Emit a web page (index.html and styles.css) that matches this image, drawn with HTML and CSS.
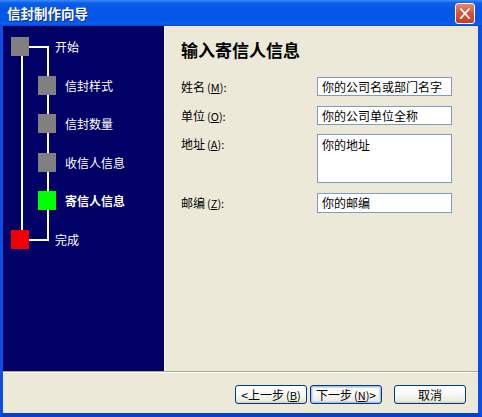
FILE: index.html
```html
<!DOCTYPE html>
<html lang="zh">
<head>
<meta charset="utf-8">
<title>信封制作向导</title>
<link rel="stylesheet" href="styles.css">
</head>
<body>
<div class="window">
  <div class="titlebar">
    <span class="title">信封制作向导</span>
    <span class="close">
      <svg width="20" height="21" viewBox="0 0 20 21"><path d="M5.5 5.5 L14.5 15.5 M14.5 5.5 L5.5 15.5" stroke="#fff" stroke-width="2" stroke-linecap="square"/></svg>
    </span>
  </div>
  <div class="frame">
    <div class="main">
      <div class="steps">
        <span class="line h-top"></span>
        <span class="line v-right"></span>
        <span class="line h-bottom"></span>
        <span class="line v-left"></span>
        <div class="step lvl0"><span class="box gray"></span><span class="label">开始</span></div>
        <div class="step lvl1"><span class="box gray"></span><span class="label">信封样式</span></div>
        <div class="step lvl1"><span class="box gray"></span><span class="label">信封数量</span></div>
        <div class="step lvl1"><span class="box gray"></span><span class="label">收信人信息</span></div>
        <div class="step lvl1"><span class="box green"></span><span class="label current">寄信人信息</span></div>
        <div class="step lvl0"><span class="box red"></span><span class="label">完成</span></div>
      </div>
      <div class="content">
        <h1 class="heading">输入寄信人信息</h1>
        <div class="form">
          <span class="flabel">姓名<span class="paren">(<u>M</u>):</span></span>
          <div class="field">你的公司名或部门名字</div>
          <span class="flabel">单位<span class="paren">(<u>O</u>):</span></span>
          <div class="field">你的公司单位全称</div>
          <span class="flabel">地址<span class="paren">(<u>A</u>):</span></span>
          <div class="field area">你的地址</div>
          <span class="flabel">邮编<span class="paren">(<u>Z</u>):</span></span>
          <div class="field last">你的邮编</div>
        </div>
      </div>
    </div>
    <div class="sep"></div>
    <div class="buttons">
      <button class="btn">&lt;上一步<span class="paren">(<u>B</u>)</span></button>
      <button class="btn default">下一步<span class="paren">(<u>N</u>)</span>&gt;</button>
      <button class="btn cancel">取消</button>
    </div>
  </div>
</div>
</body>
</html>
```
FILE: styles.css
```css
html, body {
  margin: 0;
  padding: 0;
  background: #ffffff;
}
body {
  font-family: "Noto Sans CJK SC", "Liberation Sans", sans-serif;
  font-size: 12px;
}
.window {
  width: 482px;
  height: 417px;
  display: flex;
  flex-direction: column;
  overflow: hidden;
}
.titlebar {
  height: 26px;
  flex: none;
  display: flex;
  align-items: center;
  justify-content: space-between;
  padding: 0 7px 0 7px;
  box-sizing: border-box;
  background: linear-gradient(to bottom, #3d8bf5 0%, #0a5ee9 12%, #0356e6 40%, #0557e8 80%, #0a5fef 92%, #0048d0 100%);
}
.title {
  color: #ffffff;
  font-weight: bold;
  font-size: 13.5px;
  letter-spacing: 0;
  text-shadow: 1px 1px 0 #0b2a88;
  line-height: 26px;
}
.close {
  width: 20px;
  height: 21px;
  box-sizing: border-box;
  border: 1px solid #ffffff;
  border-radius: 3px;
  background: linear-gradient(to bottom, #e98a6c 0%, #d8553a 45%, #c3401f 100%);
  display: flex;
  margin-top: 0;
  margin-right: 0;
}
.close svg {
  width: 18px;
  height: 19px;
}
.frame {
  flex: 1;
  display: flex;
  flex-direction: column;
  border-left: 3px solid #0a4fe0;
  border-right: 4px solid #0a4fe0;
  border-bottom: 4px solid #0841c8;
  background: #ece9d8;
}
.main {
  height: 345px;
  flex: none;
  display: flex;
}
.steps {
  width: 161px;
  flex: none;
  background: #000066;
  position: relative;
  display: flex;
  flex-direction: column;
  gap: 19.6px;
  padding-top: 11px;
  box-sizing: border-box;
}
.line {
  position: absolute;
  background: #ffffff;
}
.h-top { left: 26px; top: 20px; width: 20px; height: 2px; }
.v-right { left: 44px; top: 20px; width: 2px; height: 195px; }
.h-bottom { left: 26px; top: 213px; width: 20px; height: 2px; }
.v-left { left: 18px; top: 30px; width: 2px; height: 174px; }
.step {
  position: relative;
  height: 19px;
  display: flex;
  align-items: center;
}
.box {
  width: 18px;
  height: 19px;
  flex: none;
}
.gray { background: #808080; }
.green { background: #00ff00; }
.red { background: #f00000; }
.lvl0 .box { margin-left: 8px; }
.lvl0 .label { margin-left: 26px; }
.lvl1 .box { margin-left: 35px; }
.lvl1 .label { margin-left: 9px; }
.label {
  color: #ffffff;
  font-size: 12px;
  line-height: 19px;
}
.label.current { font-weight: bold; }
.content {
  flex: 1;
  padding: 14px 0 0 17px;
  box-shadow: inset 1px 0 0 #f6f4ec, inset -3px 0 0 #efe6d8;
}
.heading {
  margin: 0;
  font-size: 17px;
  font-weight: bold;
  line-height: 20px;
  color: #000000;
}
.form {
  margin-top: 17px;
  display: grid;
  grid-template-columns: 136px 135px;
  grid-template-rows: 19px 19px 49px 20px;
  row-gap: 9.5px;
  align-items: start;
}
.flabel {
  line-height: 19px;
  color: #000000;
  font-size: 12px;
}
.paren {
  margin-left: 2px;
  font-size: 11px;
}
.field {
  height: 19px;
  box-sizing: border-box;
  border: 1px solid #7f9db9;
  background: #ffffff;
  color: #000000;
  padding: 0 4px;
  line-height: 17px;
  font-size: 12px;
  white-space: nowrap;
  overflow: hidden;
}
.field.area {
  height: 49px;
  padding-top: 1px;
}
.field.last { height: 20px; line-height: 18px; }
.sep {
  height: 2px;
  flex: none;
  border-top: 1px solid #aca899;
  border-bottom: 1px solid #ffffff;
  box-sizing: border-box;
}
.buttons {
  flex: 1;
  display: flex;
  justify-content: flex-end;
  align-items: flex-start;
  padding: 12px 12px 0 0;
  gap: 3px;
}
.btn {
  width: 72px;
  height: 19px;
  box-sizing: border-box;
  padding: 0;
  margin: 0;
  border: 1px solid #003c74;
  border-radius: 3px;
  background: linear-gradient(to bottom, #ffffff 0%, #f7f7f3 50%, #ecebe6 85%, #d6d0c5 100%);
  font-family: "Noto Sans CJK SC", "Liberation Sans", sans-serif;
  font-size: 12px;
  line-height: 17px;
  color: #000000;
  white-space: nowrap;
}
.btn.default {
  box-shadow: inset 0 0 0 1px #a6c1ef, inset 0 0 0 2px #cfdcf5;
}
.btn.cancel {
  margin-left: 9px;
}
```
